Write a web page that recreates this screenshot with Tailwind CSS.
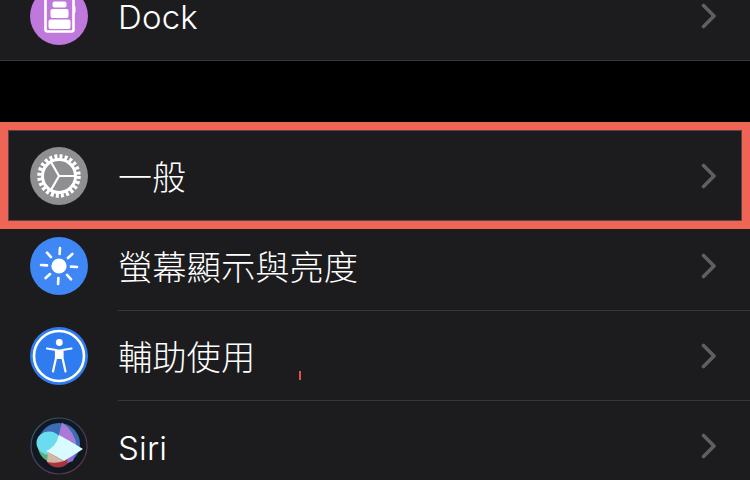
<!DOCTYPE html>
<html lang="zh-Hant">
<head>
<meta charset="utf-8">
<script src="https://cdn.jsdelivr.net/npm/@tailwindcss/browser@4"></script>
</head>
<body class="bg-black">
<div class="relative w-[750px] h-[480px] overflow-hidden bg-black text-white font-['Inter','Noto_Sans_CJK_TC',sans-serif]">
  <div class="-mt-[29px] flex flex-col">
    <!-- Dock -->
    <div class="h-[90px] bg-[#1c1c1e] border-b border-[#38383a] flex items-center pl-[30px] pr-[33px]">
      <svg class="w-[58px] h-[58px] shrink-0" viewBox="0 0 58 58">
        <circle cx="29" cy="29" r="29" fill="#bf78dc"/>
        <rect x="15.5" y="-4" width="28" height="48.5" rx="2" fill="none" stroke="#fff" stroke-width="2.6"/>
        <rect x="43" y="19" width="2.5" height="7" rx="1" fill="#fff"/>
        <rect x="18.500" y="32.500" width="22" height="9.500" rx="2" fill="#fff"/>
        <rect x="20.500" y="22" width="18" height="9" rx="2" fill="#fff"/>
        <rect x="22.500" y="14.500" width="14" height="6" rx="2" fill="#fff"/>
      </svg>
      <span class="ml-[30px] pt-[4px] text-[33px] font-light tracking-[0.2px] leading-none">Dock</span>
      <svg class="ml-auto w-[16px] h-[26px]" viewBox="0 0 16 26"><path d="M2.5 2.5 13 13 2.5 23.5" fill="none" stroke="#5f5f62" stroke-width="3.6" stroke-linecap="round" stroke-linejoin="round"/></svg>
    </div>
    <div class="h-[70px]"></div>
    <!-- General -->
    <div class="h-[90px] bg-[#1c1c1e] flex items-center pl-[30px] pr-[33px]">
      <svg class="w-[58px] h-[58px] shrink-0" viewBox="0 0 58 58">
        <circle cx="29" cy="29" r="29" fill="#8e8e93"/>
        <circle cx="29" cy="29" r="19.500" fill="none" stroke="#fff" stroke-width="4.500" stroke-dasharray="3 2.100"/>
        <circle cx="29" cy="29" r="16.500" fill="none" stroke="#fff" stroke-width="3"/>
        <path d="M29 29H46M29 29 20.500 43.700M29 29 20.500 14.300" fill="none" stroke="#fff" stroke-width="2.200"/>
      </svg>
      <span class="ml-[30px] pt-[4px] text-[34px] font-light leading-none">一般</span>
      <svg class="ml-auto w-[16px] h-[26px]" viewBox="0 0 16 26"><path d="M2.5 2.5 13 13 2.5 23.5" fill="none" stroke="#5f5f62" stroke-width="3.6" stroke-linecap="round" stroke-linejoin="round"/></svg>
    </div>
    <!-- Display -->
    <div class="h-[90px] bg-[#1c1c1e] flex items-center pl-[30px] pr-[33px] relative">
      <svg class="w-[58px] h-[58px] shrink-0" viewBox="0 0 58 58">
        <circle cx="29" cy="29" r="29" fill="#3f87f5"/>
        <circle cx="29" cy="29" r="7.6" fill="#fff"/>
        <g transform="rotate(3 29 29)" stroke="#fff" stroke-width="2.6" stroke-linecap="round">
          <path d="M29 11V17M29 41V47M11 29H17M41 29H47M16.3 16.3 20.5 20.5M37.5 37.5 41.7 41.7M41.7 16.3 37.5 20.5M20.5 37.5 16.3 41.700"/>
        </g>
      </svg>
      <span class="ml-[30px] pt-[4px] text-[34.300px] font-light leading-none">螢幕顯示與亮度</span>
      <svg class="ml-auto w-[16px] h-[26px]" viewBox="0 0 16 26"><path d="M2.5 2.5 13 13 2.5 23.5" fill="none" stroke="#5f5f62" stroke-width="3.6" stroke-linecap="round" stroke-linejoin="round"/></svg>
      <div class="absolute left-[118px] right-0 bottom-0 h-px bg-[#38383a]"></div>
    </div>
    <!-- Accessibility -->
    <div class="h-[90px] bg-[#1c1c1e] flex items-center pl-[30px] pr-[33px] relative">
      <svg class="w-[58px] h-[58px] shrink-0" viewBox="0 0 58 58">
        <circle cx="29" cy="29" r="29" fill="#2f7cf0"/>
        <circle cx="29" cy="29" r="25" fill="none" stroke="#fff" stroke-width="2.6"/>
        <circle cx="29.3" cy="15.5" r="3.4" fill="#fff"/>
        <path d="M17 21.5 26 23 V31 L23 44.5M41.5 21.5 32.500 23 V31 L35.500 44.5" fill="none" stroke="#fff" stroke-width="2.2" stroke-linecap="round" stroke-linejoin="round"/>
        <path d="M26 22.500H32.500V32H26Z" fill="#fff"/>
      </svg>
      <span class="ml-[30px] pt-[4px] text-[34.300px] font-light leading-none">輔助使用</span>
      <svg class="ml-auto w-[16px] h-[26px]" viewBox="0 0 16 26"><path d="M2.5 2.5 13 13 2.5 23.5" fill="none" stroke="#5f5f62" stroke-width="3.6" stroke-linecap="round" stroke-linejoin="round"/></svg>
      <div class="absolute left-[118px] right-0 bottom-0 h-px bg-[#38383a]"></div>
    </div>
    <!-- Siri -->
    <div class="h-[90px] bg-[#1c1c1e] flex items-center pl-[30px] pr-[33px]">
      <svg class="w-[58px] h-[58px] shrink-0" viewBox="0 0 58 58">
        <defs>
          <linearGradient id="r" x1="0" y1="0" x2="1" y2="1">
            <stop offset="0" stop-color="#2a6070"/><stop offset="0.5" stop-color="#453c60"/><stop offset="1" stop-color="#6a3040"/>
          </linearGradient>
        </defs>
        <circle cx="29" cy="29" r="28" fill="#121820" stroke="url(#r)" stroke-width="1.200"/>
        <circle cx="29" cy="27" r="21" fill="#3b6db5"/>
        <circle cx="28" cy="37" r="13.500" fill="#a83442"/>
        <path d="M7.500 28 Q9 42 21 45 L19 30Z" fill="#5cae80"/>
        <path d="M32 5.500 Q45 14 47 31 L28 21Z" fill="#a97ad8"/>
        <path d="M38 38 L47 31 L43 44 L37 46Z" fill="#8d6fd0"/>
        <ellipse cx="19" cy="26" rx="12.500" ry="11.500" fill="#6bdcef"/>
        <path d="M29 18 Q35 21 53 32 Q44 38 34 44 L16 34 Q26 30 29 18Z" fill="#d8fbff"/>
        <path d="M18 35 L34 44 Q26 47 17 45Z" fill="#d0b8a2"/>
      </svg>
      <span class="ml-[30px] pt-[4px] text-[33px] font-light tracking-[0.2px] leading-none">Siri</span>
      <svg class="ml-auto w-[16px] h-[26px]" viewBox="0 0 16 26"><path d="M2.5 2.5 13 13 2.5 23.5" fill="none" stroke="#5f5f62" stroke-width="3.6" stroke-linecap="round" stroke-linejoin="round"/></svg>
    </div>
  </div>
  <!-- Highlight annotation -->
  <div class="absolute left-0 right-0 top-[122px] h-[107px] border-[8px] border-[#ee6555] shadow-[inset_0_0_0_1px_#5a4342]"></div>
  <div class="absolute left-[299px] top-[371px] w-[1.5px] h-[9px] bg-[#e0504f]"></div>
</div>
</body>
</html>
